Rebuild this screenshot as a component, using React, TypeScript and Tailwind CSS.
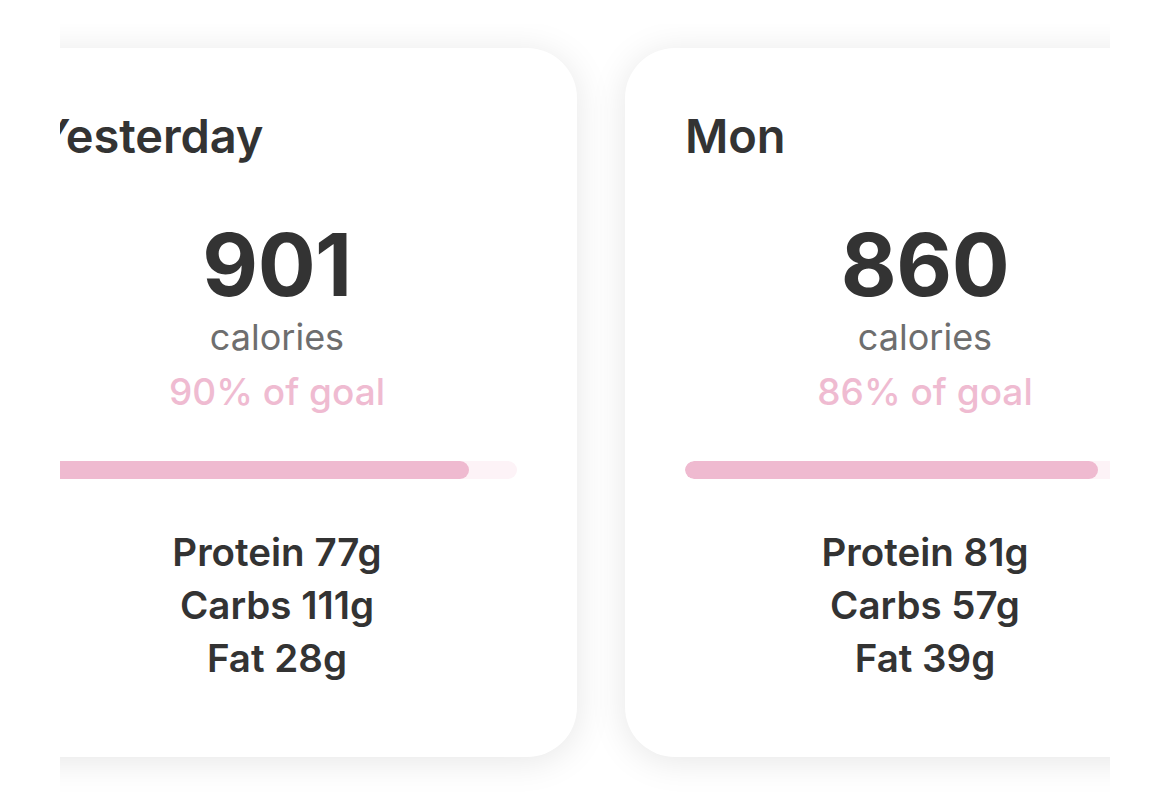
import React from "react";

type Day = {
  label: string;
  calories: number;
  pct: number;
  protein: number;
  carbs: number;
  fat: number;
};

const days: Day[] = [
  { label: "Yesterday", calories: 901, pct: 90, protein: 77, carbs: 111, fat: 28 },
  { label: "Mon", calories: 860, pct: 86, protein: 81, carbs: 57, fat: 39 },
];

const DayCard: React.FC<{ day: Day }> = ({ day }) => {
  return (
    <div className="w-[600px] shrink-0 bg-white rounded-[50px] shadow-[0_4px_36px_rgba(0,0,0,0.1)] pt-[60px] pb-[72px] px-[60px] flex flex-col">
      <h3 className="text-[47px] leading-[56px] font-semibold text-[#333333] tracking-[-0.1px]">
        {day.label}
      </h3>
      <div className="mt-[57px] flex flex-col items-center">
        <div className="text-[86px] leading-[88px] font-bold text-[#333333] tracking-[-0.5px]">
          {day.calories}
        </div>
        <div className="mt-[5px] text-[36px] leading-[46px] text-[#6e6e6e]">calories</div>
        <div className="mt-[9px] text-[37px] leading-[46px] font-medium text-[#efbbd1]">
          {day.pct}% of goal
        </div>
      </div>
      <div className="mt-[46px] h-[18px] w-full rounded-full bg-[#fdf3f7] overflow-hidden">
        <div
          className="h-full rounded-full bg-[#efbad0]"
          style={{ width: `${day.pct}%` }}
        />
      </div>
      <div className="mt-[47px] flex flex-col items-center text-[38.5px] leading-[53px] font-semibold text-[#333333]">
        <span>Protein {day.protein}g</span>
        <span>Carbs {day.carbs}g</span>
        <span>Fat {day.fat}g</span>
      </div>
    </div>
  );
};

export default function App() {
  return (
    <div
      className="w-[1170px] h-[797px] bg-white overflow-hidden"
      style={{ fontFamily: "Inter, 'Noto Sans', sans-serif" }}
    >
      <div className="ml-[60px] mt-[24px] w-[1050px] overflow-hidden pt-[24px] pb-[60px]">
        <div className="flex gap-[48px] -ml-[83px]">
          {days.map((d) => (
            <DayCard key={d.label} day={d} />
          ))}
        </div>
      </div>
    </div>
  );
}
